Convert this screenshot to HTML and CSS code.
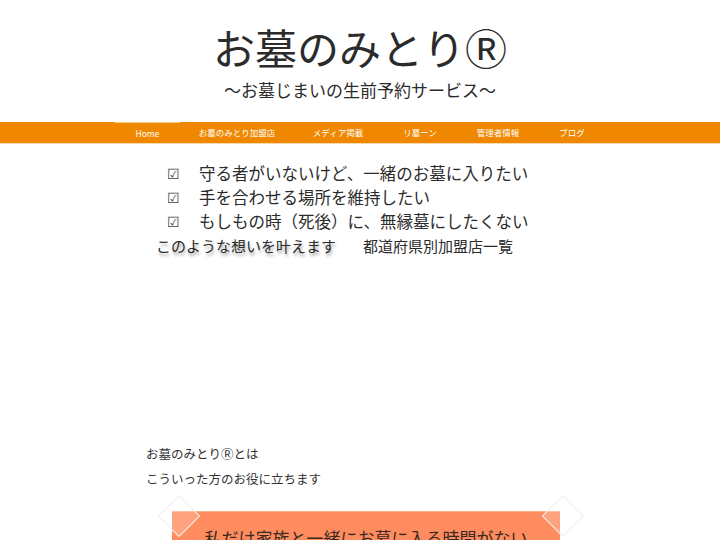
FILE: index.html
```html
<!DOCTYPE html>
<html lang="ja">
<head>
<meta charset="utf-8">
<link rel="stylesheet" href="styles.css">
</head>
<body>
<header class="header">
  <h1 class="title">お墓のみとりⓇ</h1>
  <p class="subtitle">〜お墓じまいの生前予約サービス〜</p>
</header>
<nav class="nav">
  <a class="nav-item active w1">Home</a>
  <a class="nav-item w2">お墓のみとり加盟店</a>
  <a class="nav-item w3">メディア掲載</a>
  <a class="nav-item w4">リ墓ーン</a>
  <a class="nav-item w5">管理者情報</a>
  <a class="nav-item w6">ブログ</a>
</nav>
<main class="main">
  <ul class="checks">
    <li><span class="box">☑</span>守る者がいないけど、一緒のお墓に入りたい</li>
    <li><span class="box">☑</span>手を合わせる場所を維持したい</li>
    <li><span class="box">☑</span>もしもの時（死後）に、無縁墓にしたくない</li>
  </ul>
  <div class="lead-row">
    <span class="lead">このような想いを叶えます</span>
    <span class="link">都道府県別加盟店一覧</span>
  </div>
  <div class="about">
    <p>お墓のみとりⓇとは</p>
    <p>こういった方のお役に立ちます</p>
  </div>
  <div class="banner-wrap">
    <span class="deco deco-l"></span>
    <div class="banner">私だけ家族と一緒にお墓に入る時間がない</div>
    <span class="deco deco-r"></span>
  </div>
</main>
</body>
</html>
```
FILE: styles.css
```css
* { box-sizing: border-box; }
html, body { margin: 0; padding: 0; background: #fff; overflow: hidden; }
body {
  font-family: "Noto Sans CJK JP", "Noto Sans", sans-serif;
  color: #333;
  width: 720px;
  height: 540px;
}
.header { text-align: center; padding-top: 17px; height: 122px; }
.title {
  margin: 0;
  font-weight: 400;
  font-size: 42px;
  line-height: 60px;
  color: #2b2b2b;
  letter-spacing: 0;
}
.subtitle {
  margin: 1px 0 0;
  font-size: 17px;
  line-height: 24px;
  color: #2b2b2b;
}
.nav {
  background: #ef8800;
  height: 22px;
  display: flex;
  padding-left: 115px;
  border-bottom: 1px solid #f5d9b0;
}
.nav-item {
  color: #fff;
  font-size: 8.5px;
  line-height: 21px;
  text-align: center;
  white-space: nowrap;
}
.nav-item.active {
  border-top: 1px solid #f7c98a;
  line-height: 20px;
}
.w1 { width: 65px; }
.w2 { width: 114px; }
.w3 { width: 88px; }
.w4 { width: 76px; }
.w5 { width: 80px; }
.w6 { width: 68px; }
.main { padding-top: 17px; }
.checks {
  list-style: none;
  margin: 0;
  padding: 0 0 0 166px;
  font-size: 16.5px;
  line-height: 24px;
  color: #2b2b2b;
}
.checks li { display: flex; }
.box { width: 33px; font-size: 14px; color: #444; padding-left: 1px; }
.lead-row {
  padding-left: 156px;
  font-size: 15px;
  line-height: 26px;
  color: #2b2b2b;
  display: flex;
  gap: 27px;
}
.lead { text-shadow: 1px 3px 3px rgba(0,0,0,0.35); }
.about {
  padding-left: 146px;
  margin-top: 182px;
  font-size: 12.5px;
  color: #333;
}
.about p { margin: 0; line-height: 25px; }
.banner-wrap {
  position: relative;
  margin: 20px 0 0 172px;
  width: 388px;
}
.banner {
  background: #ff8c5e;
  height: 60px;
  font-size: 17px;
  line-height: 24px;
  color: #3a2a22;
  text-align: center;
  padding-top: 14px;
  border-top: 1px solid #ffb08a;
}
.deco {
  position: absolute;
  top: -10px;
  width: 30px;
  height: 30px;
  border: 1px solid #f0f0f0;
  transform: rotate(45deg);
  background: rgba(255,255,255,0.2);
}
.deco-l { left: -8px; }
.deco-r { right: -18px; }
```
